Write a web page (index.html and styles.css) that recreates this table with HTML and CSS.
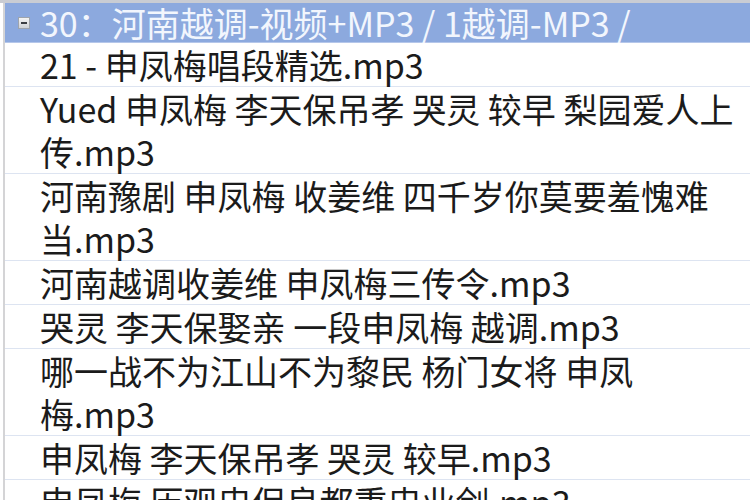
FILE: index.html
```html
<!DOCTYPE html>
<html lang="zh">
<head>
<meta charset="utf-8">
<link rel="stylesheet" href="styles.css">
</head>
<body>
<div class="topstrip"></div>
<div class="list">
  <div class="group">
    <span class="toggle"><span class="bar"></span></span>
    <span class="gtitle">30<span class="colon">：</span>河南越调-视频+MP3 / 1越调-MP3 /</span>
  </div>
  <div class="row">21 - 申凤梅唱段精选.mp3</div>
  <div class="row">Yued 申凤梅 李天保吊孝 哭灵 较早 梨园爱人上<br>传.mp3</div>
  <div class="row">河南豫剧 申凤梅 收姜维 四千岁你莫要羞愧难<br>当.mp3</div>
  <div class="row">河南越调收姜维 申凤梅三传令.mp3</div>
  <div class="row">哭灵 李天保娶亲 一段申凤梅 越调.mp3</div>
  <div class="row">哪一战不为江山不为黎民 杨门女将 申凤<br>梅.mp3</div>
  <div class="row">申凤梅 李天保吊孝 哭灵 较早.mp3</div>
  <div class="row">申凤梅 历观忠保良都秉忠业剑.mp3</div>
</div>
</body>
</html>
```

FILE: styles.css
```css
html, body {
  margin: 0;
  padding: 0;
  background: #ffffff;
  overflow: hidden;
}
body {
  width: 750px;
  height: 500px;
  font-family: "Noto Sans CJK SC", "Noto Sans", sans-serif;
}
.topstrip {
  height: 3px;
  background: #c9ccd3;
}
.list {
  margin-left: 3px;
  border-left: 2px solid #d4d4d6;
}
.group {
  display: flex;
  align-items: center;
  height: 39px;
  background: #8ca9de;
  border-bottom: 1px solid #b5c7ea;
  color: #f2f6fd;
  font-size: 34px;
  white-space: nowrap;
}
.toggle {
  flex: none;
  width: 10px;
  height: 10px;
  margin-left: 13px;
  margin-right: 10px;
  border: 1px solid #9ea4ad;
  background: linear-gradient(#f4f4f4, #cfd2d6);
  display: flex;
  align-items: center;
  justify-content: center;
}
.toggle .bar {
  width: 6px;
  height: 2px;
  background: #3a3d42;
}
.gtitle {
  line-height: 39px;
}
.colon {
  font-family: "Noto Sans CJK JP", "Noto Sans CJK SC", sans-serif;
}
.row {
  padding-left: 35px;
  font-size: 34px;
  line-height: 43px;
  color: #1b1b1b;
  white-space: nowrap;
  border-bottom: 1px solid #dde4f1;
}
```
